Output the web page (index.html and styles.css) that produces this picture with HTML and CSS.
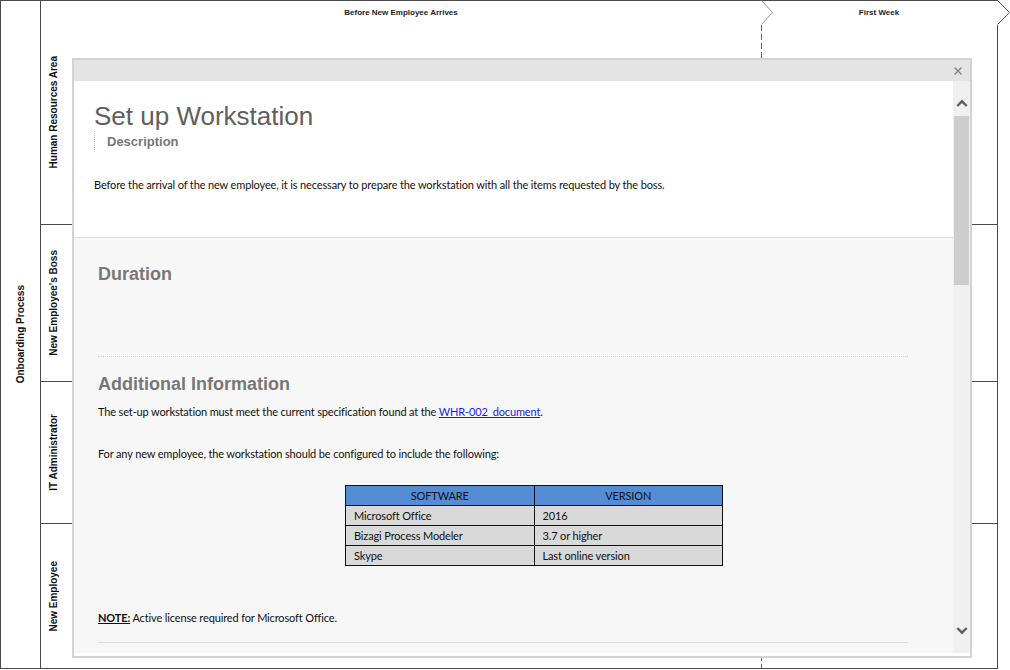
FILE: index.html
```html
<!DOCTYPE html>
<html>
<head>
<meta charset="utf-8">
<title>Set up Workstation</title>
<link rel="stylesheet" href="styles.css">
</head>
<body>
<div class="stage">
  <div class="pool">
    <div class="pool-label"><span class="vtext">Onboarding Process</span></div>
    <div class="lanes">
      <div class="lane lane-hr"><div class="lane-label"><span class="vtext">Human Resources Area</span></div></div>
      <div class="lane lane-boss"><div class="lane-label"><span class="vtext">New Employee's Boss</span></div></div>
      <div class="lane lane-it"><div class="lane-label"><span class="vtext">IT Administrator</span></div></div>
      <div class="lane lane-new"><div class="lane-label"><span class="vtext">New Employee</span></div></div>
    </div>
  </div>

  <div class="phases">
    <div class="phase phase-1">Before New Employee Arrives</div>
    <div class="phase phase-2">First Week</div>
  </div>

  <svg class="diagram-lines" width="1010" height="670" viewBox="0 0 1010 670">
    <rect x="997" y="1" width="1" height="24" fill="#fff"/>
    <polyline points="997.5,0.5 1009.5,12.5 997.5,24.5" fill="none" stroke="#555" stroke-width="1"/>
    <polyline points="761.5,0.5 772.5,12.5 761.5,24.5" fill="none" stroke="#999" stroke-width="1"/>
    <line x1="761.5" y1="25" x2="761.5" y2="668" stroke="#666" stroke-width="1" stroke-dasharray="6,3"/>
  </svg>

  <div class="dialog">
    <div class="dialog-bar">
      <svg class="close" width="8" height="8" viewBox="0 0 8 8"><path d="M0.5 0.5 L7.5 7.5 M7.5 0.5 L0.5 7.5" stroke="#808080" stroke-width="1.3" fill="none"/></svg>
    </div>
    <div class="dialog-body">
      <div class="content">
        <section class="head">
          <h1 class="title">Set up Workstation</h1>
          <h2 class="desc-label">Description</h2>
          <p class="text desc-text">Before the arrival of the new employee, it is necessary to prepare the workstation with all the items requested by the boss.</p>
        </section>
        <section class="details">
          <h3 class="sub">Duration</h3>
          <hr class="rule-dotted">
          <h3 class="sub sub-info">Additional Information</h3>
          <p class="text p-spec">The set-up workstation must meet the current specification found at the <a href="#" class="link">WHR-002_document</a>.</p>
          <p class="text p-any">For any new employee, the workstation should be configured to include the following:</p>
          <table class="soft">
            <thead>
              <tr><th class="c1">SOFTWARE</th><th class="c2">VERSION</th></tr>
            </thead>
            <tbody>
              <tr><td>Microsoft Office</td><td>2016</td></tr>
              <tr><td>Bizagi Process Modeler</td><td>3.7 or higher</td></tr>
              <tr><td>Skype</td><td>Last online version</td></tr>
            </tbody>
          </table>
          <p class="text note"><b class="note-key">NOTE:</b> Active license required for Microsoft Office.</p>
          <hr class="rule-solid">
        </section>
      </div>
      <div class="scrollbar">
        <svg class="arrow-up" width="12" height="8" viewBox="0 0 12 8"><polyline points="1.3,7 6,2.3 10.7,7" fill="none" stroke="#606060" stroke-width="2.4"/></svg>
        <div class="thumb"></div>
        <div class="track-space"></div>
        <svg class="arrow-down" width="12" height="8" viewBox="0 0 12 8"><polyline points="1.3,1 6,5.7 10.7,1" fill="none" stroke="#606060" stroke-width="2.4"/></svg>
      </div>
    </div>
  </div>
</div>
</body>
</html>
```

FILE: styles.css
```css
* { box-sizing: border-box; }

html, body {
  margin: 0;
  padding: 0;
  background: #fff;
}

body {
  width: 1010px;
  height: 670px;
  overflow: hidden;
  font-family: "Liberation Sans", Arial, sans-serif;
  color: #111;
}

.stage {
  position: relative;
  width: 1010px;
  height: 670px;
}

/* ---------- diagram ---------- */
.pool {
  display: flex;
  width: 998px;
  height: 669px;
  border: 1px solid #4a4a4a;
}

.pool-label {
  width: 40px;
  border-right: 1px solid #4a4a4a;
  display: flex;
  align-items: center;
  justify-content: center;
}

.vtext {
  writing-mode: vertical-rl;
  transform: rotate(180deg);
  font-weight: bold;
  font-size: 10px;
  white-space: nowrap;
  color: #111;
}

.lanes {
  flex: 1;
  display: flex;
  flex-direction: column;
}

.lane {
  display: flex;
  border-bottom: 1px solid #4a4a4a;
}

.lane-hr { height: 224px; }
.lane-boss { height: 157px; }
.lane-it { height: 142px; }
.lane-new { flex: 1; border-bottom: none; }

.lane-label {
  width: 24px;
  display: flex;
  align-items: center;
  justify-content: center;
}

.phases {
  position: absolute;
  left: 41px;
  top: 1px;
  width: 956px;
  height: 23px;
  display: flex;
}

.phase {
  font-size: 8px;
  font-weight: bold;
  text-align: center;
  padding-top: 7px;
  color: #1a1a2a;
}

.phase-1 { width: 720px; }
.phase-2 { flex: 1; }

.diagram-lines {
  position: absolute;
  left: 0;
  top: 0;
}

/* ---------- dialog ---------- */
.dialog {
  position: absolute;
  left: 72px;
  top: 58px;
  width: 900px;
  height: 600px;
  border: 2px solid #d3d3d3;
  background: #fff;
  display: flex;
  flex-direction: column;
  padding-bottom: 3px;
}

.dialog-bar {
  height: 21px;
  flex: none;
  background: #e4e4e4;
  display: flex;
  align-items: center;
  justify-content: flex-end;
  padding-right: 8px;
}

.close { display: block; }

.dialog-body {
  flex: 1;
  min-height: 0;
  display: flex;
}

.content {
  flex: 1;
  display: flex;
  flex-direction: column;
  overflow: hidden;
}

.head {
  padding: 20px 20px 45px 20px;
  background: #fff;
}

.title {
  margin: 0;
  font-size: 26px;
  line-height: 30px;
  font-weight: normal;
  color: #606060;
}

.desc-label {
  margin: 0;
  height: 21px;
  border-left: 1px dotted #bdbdbd;
  padding-left: 12px;
  font-size: 13px;
  line-height: 21px;
  font-weight: bold;
  color: #777;
}

.text {
  margin: 0;
  font-family: Lato, "Open Sans", sans-serif;
  font-size: 11px;
  line-height: 15px;
  letter-spacing: -0.14px;
  color: #111;
}

.desc-text { margin-top: 25px; }

.details {
  flex: 1;
  background: #f7f7f7;
  border-top: 1px solid #dcdcdc;
  padding: 26px 45px 0 24px;
}

.sub {
  margin: 0;
  font-size: 18px;
  line-height: 21px;
  font-weight: bold;
  color: #777;
}

.rule-dotted {
  margin: 71px 0 0 0;
  border: 0;
  height: 0;
  border-top: 1px dotted #cfcfcf;
}

.sub-info { margin-top: 17px; }

.p-spec { margin-top: 9px; }
.p-any { margin-top: 27px; }

.link {
  color: #1a1aee;
  text-decoration: underline;
}

.soft {
  margin-top: 24px;
  margin-left: 247px;
  border-collapse: collapse;
  width: 378px;
  font-family: Lato, "Open Sans", sans-serif;
  font-size: 11px;
  letter-spacing: -0.14px;
  color: #111;
}

.soft th, .soft td {
  border: 1px solid #111;
  height: 20px;
  padding: 0 8px;
  line-height: 15px;
  text-align: left;
  width: 50%;
}

.soft th {
  background: #548dd4;
  font-weight: normal;
  text-align: center;
}

.soft td { background: #d9d9d9; }

.note { margin-top: 44px; }

.note-key { text-decoration: underline; }

.rule-solid {
  margin: 17px 0 0 0;
  border: 0;
  height: 0;
  border-top: 1px solid #dcdcdc;
}

/* ---------- scrollbar ---------- */
.scrollbar {
  width: 17px;
  flex: none;
  background: #f0f0f0;
  display: flex;
  flex-direction: column;
  align-items: center;
}

.arrow-up {
  display: block;
  margin-top: 18px;
}

.thumb {
  margin-top: 9px;
  width: 15px;
  height: 169px;
  background: #cdcdcd;
}

.track-space { flex: 1; }

.arrow-down {
  display: block;
  margin-bottom: 18px;
}
```
